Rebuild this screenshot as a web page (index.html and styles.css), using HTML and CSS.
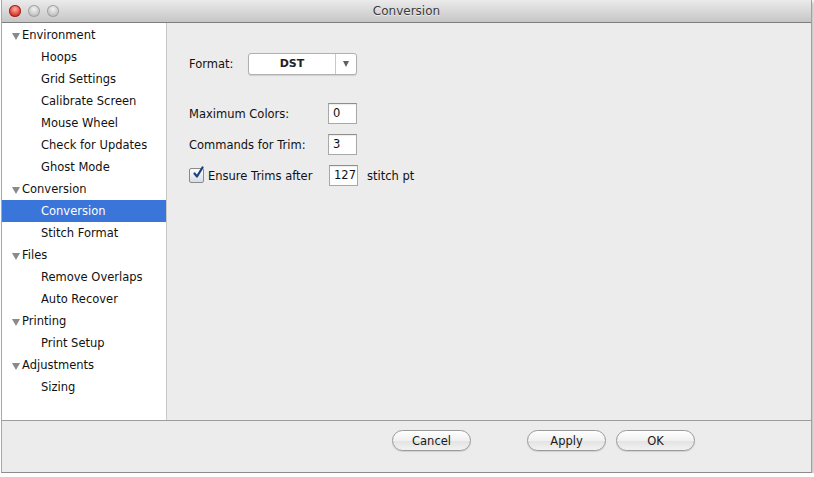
FILE: index.html
```html
<!DOCTYPE html>
<html lang="en">
  <head>
    <meta charset="UTF-8" />
    <meta name="viewport" content="width=device-width, initial-scale=1.0" />
    <title>Conversion</title>
    <link rel="stylesheet" href="styles.css">
  </head>
  <body>
    <div class="window">
      <div class="titlebar">
        <div class="lights">
          <span class="light close"></span>
          <span class="light"></span>
          <span class="light"></span>
        </div>
        <div class="title">Conversion</div>
      </div>
      <div class="main">
        <div class="sidebar">
          <div class="tree-row parent"><span class="arrow"></span>Environment</div>
          <div class="tree-row child">Hoops</div>
          <div class="tree-row child">Grid Settings</div>
          <div class="tree-row child">Calibrate Screen</div>
          <div class="tree-row child">Mouse Wheel</div>
          <div class="tree-row child">Check for Updates</div>
          <div class="tree-row child">Ghost Mode</div>
          <div class="tree-row parent"><span class="arrow"></span>Conversion</div>
          <div class="tree-row child selected">Conversion</div>
          <div class="tree-row child">Stitch Format</div>
          <div class="tree-row parent"><span class="arrow"></span>Files</div>
          <div class="tree-row child">Remove Overlaps</div>
          <div class="tree-row child">Auto Recover</div>
          <div class="tree-row parent"><span class="arrow"></span>Printing</div>
          <div class="tree-row child">Print Setup</div>
          <div class="tree-row parent"><span class="arrow"></span>Adjustments</div>
          <div class="tree-row child">Sizing</div>
        </div>
        <div class="content">
          <div class="field format-field">
            <span class="label format-label">Format:</span>
            <div class="popup">
              <span class="popup-value">DST</span>
              <span class="popup-arrow"></span>
            </div>
          </div>
          <div class="field colors-field">
            <span class="label wide-label">Maximum Colors:</span>
            <span class="text-input">0</span>
          </div>
          <div class="field trim-field">
            <span class="label wide-label">Commands for Trim:</span>
            <span class="text-input">3</span>
          </div>
          <div class="field ensure-field">
            <span class="checkbox">
              <svg width="14" height="14" viewBox="0 0 14 14">
                <path d="M3.5 7.5 L6 10.5 L11.5 1.5" fill="none" stroke="#1f3f82" stroke-width="2.2" stroke-linecap="round" stroke-linejoin="round"/>
              </svg>
            </span>
            <span class="label ensure-label">Ensure Trims after</span>
            <span class="text-input">127</span>
            <span class="label unit">stitch pt</span>
          </div>
        </div>
      </div>
      <div class="footer">
        <button class="btn cancel">Cancel</button>
        <button class="btn">Apply</button>
        <button class="btn">OK</button>
      </div>
    </div>
  </body>
</html>
```

FILE: styles.css
```css
html, body {
  margin: 0;
  padding: 0;
  background: #ffffff;
}
body {
  font-family: "DejaVu Sans", "Liberation Sans", sans-serif;
  font-size: 11.5px;
  color: #111111;
}
.window {
  width: 809px;
  height: 472px;
  margin-left: 1px;
  display: flex;
  flex-direction: column;
  border-left: 1px solid #a8a8a8;
  border-right: 1px solid #a0a0a0;
  border-bottom: 1px solid #8c8c8c;
  background: #ececec;
  box-shadow: 2px 2px 3px rgba(0, 0, 0, 0.25);
}
.titlebar {
  height: 22px;
  display: flex;
  align-items: center;
  background: linear-gradient(#ebebeb, #c6c6c6);
  border-bottom: 1px solid #7e7e7e;
  position: relative;
}
.lights {
  display: flex;
  gap: 7px;
  padding-left: 7px;
}
.light {
  width: 12px;
  height: 12px;
  border-radius: 50%;
  background: radial-gradient(circle at 50% 35%, #f2f2f2, #bdbdbd 70%);
  box-shadow: inset 0 0 0 1px #a3a3a3;
}
.light.close {
  background: radial-gradient(circle at 50% 35%, #ffb0a8, #e0443a 55%, #b02018);
  box-shadow: inset 0 0 0 1px #9c2a22;
}
.title {
  position: absolute;
  left: 0;
  right: 0;
  text-align: center;
  color: #3a3a3a;
  font-size: 12px;
  text-shadow: 0 1px 0 rgba(255, 255, 255, 0.6);
}
.main {
  flex: 1;
  display: flex;
}
.sidebar {
  width: 164px;
  background: #ffffff;
  border-right: 1px solid #c8c8c8;
  padding-top: 1px;
}
.tree-row {
  height: 22px;
  line-height: 22px;
  white-space: nowrap;
}
.tree-row.parent {
  display: flex;
  align-items: center;
  padding-left: 10px;
}
.tree-row.child {
  padding-left: 39px;
}
.tree-row.selected {
  background: #3a75d9;
  color: #ffffff;
}
.arrow {
  width: 0;
  height: 0;
  border-left: 4.5px solid transparent;
  border-right: 4.5px solid transparent;
  border-top: 7px solid #8a8a8a;
  margin-right: 2px;
  margin-top: 2px;
}
.content {
  flex: 1;
  padding-left: 22px;
  padding-top: 30px;
}
.field {
  display: flex;
  align-items: center;
}
.label {
  white-space: nowrap;
}
.format-label {
  width: 59px;
}
.popup {
  width: 107px;
  height: 20px;
  display: flex;
  background: #ffffff;
  border: 1px solid #b0b0b0;
  border-radius: 3px;
  box-shadow: 0 1px 1px rgba(0, 0, 0, 0.12);
}
.popup-value {
  flex: 1;
  text-align: center;
  line-height: 20px;
  font-weight: bold;
  font-size: 11px;
  color: #222222;
}
.popup-arrow {
  width: 20px;
  border-left: 1px solid #c8c8c8;
  display: flex;
  align-items: center;
  justify-content: center;
}
.popup-arrow::after {
  content: "";
  border-left: 3.5px solid transparent;
  border-right: 3.5px solid transparent;
  border-top: 6px solid #606060;
}
.colors-field {
  margin-top: 28px;
}
.trim-field {
  margin-top: 10px;
}
.ensure-field {
  margin-top: 10px;
}
.wide-label {
  width: 139px;
}
.text-input {
  width: 23px;
  height: 19px;
  line-height: 19px;
  padding-left: 4px;
  background: #ffffff;
  border: 1px solid #a8a8a8;
  border-top-color: #8e8e8e;
  box-shadow: inset 0 1px 1px rgba(0, 0, 0, 0.08);
}
.checkbox {
  width: 13px;
  height: 13px;
  border: 1px solid #8a8a8a;
  border-radius: 2px;
  background: linear-gradient(#fdfdfd, #d6dce8);
  position: relative;
  margin-right: 4px;
}
.checkbox svg {
  position: absolute;
  left: 1px;
  top: -3px;
}
.ensure-label {
  width: 121px;
}
.unit {
  margin-left: 9px;
}
.footer {
  height: 52px;
  border-top: 1px solid #9c9c9c;
  display: flex;
  align-items: flex-start;
  padding-top: 9px;
  padding-left: 390px;
  box-sizing: border-box;
}
.btn {
  width: 79px;
  height: 21px;
  font-family: inherit;
  font-size: 11.5px;
  color: #1a1a1a;
  border: 1px solid #9a9a9a;
  border-radius: 11px;
  background: linear-gradient(#ffffff, #f0f0f0 50%, #e2e2e2 51%, #f2f2f2);
  box-shadow: 0 1px 1px rgba(0, 0, 0, 0.12);
  padding: 0;
  margin-right: 10px;
}
.btn.cancel {
  margin-right: 56px;
}
```
